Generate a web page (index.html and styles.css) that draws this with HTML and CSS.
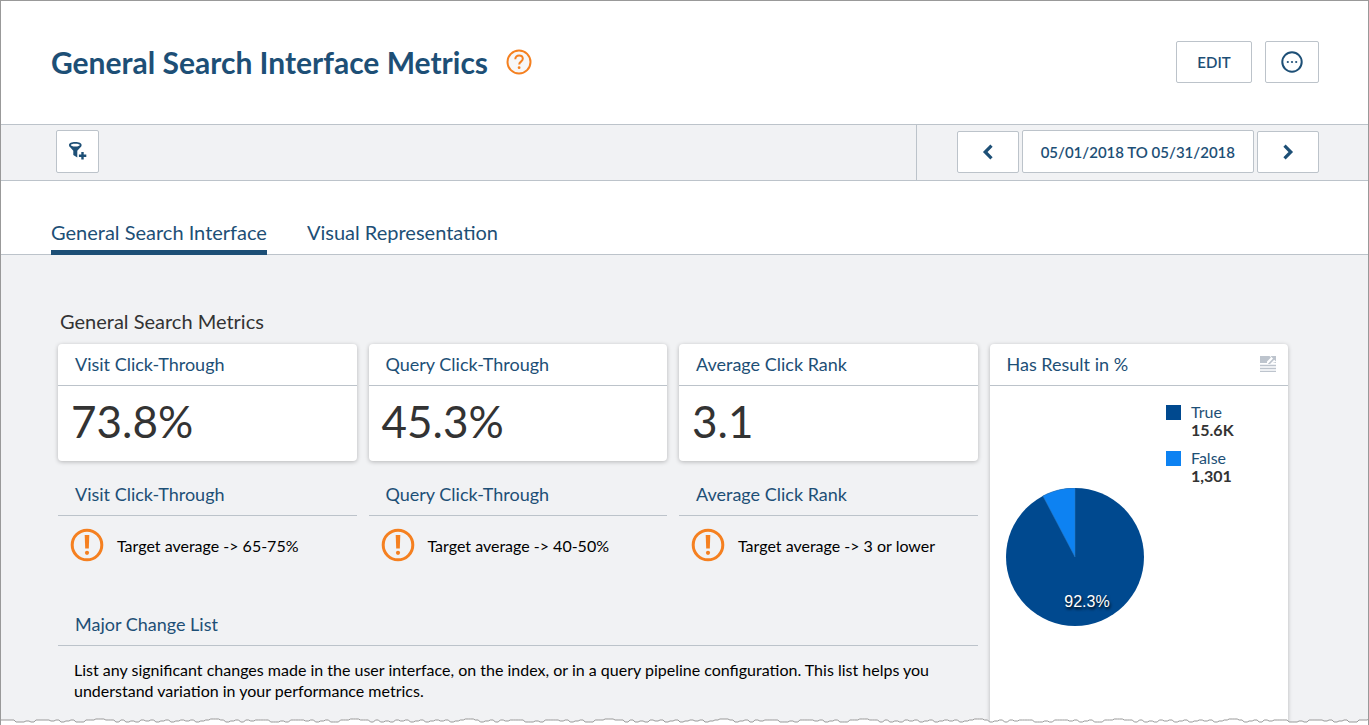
FILE: index.html
```
<!DOCTYPE html>
<html lang="en">
<head>
<meta charset="utf-8">
<title>General Search Interface Metrics</title>
<link rel="stylesheet" href="styles.css">
</head>
<body>
<div class="page">
  <header class="header">
    <h1 class="title">General Search Interface Metrics</h1>
    <a class="help" href="#" aria-label="Help">
      <svg width="26" height="26" viewBox="0 0 26 26" fill="none"><circle cx="13" cy="13" r="11.5" fill="#f7f7f8" stroke="#f58020" stroke-width="2"/><path d="M9.300 10.200c0-2.400 1.600-3.700 3.800-3.700s3.700 1.300 3.700 3.300c0 2.700-3.600 2.900-3.600 5.600" stroke="#f58020" stroke-width="2"/><circle cx="13.1" cy="18.7" r="1.4" fill="#f58020"/></svg>
    </a>
    <div class="actions">
      <button class="btn btn-edit" type="button">EDIT</button>
      <button class="btn btn-more" type="button" aria-label="More">
        <svg width="22" height="22" viewBox="0 0 22 22"><circle cx="11" cy="11" r="9.7" fill="none" stroke="#1d4f76" stroke-width="2"/><g fill="#1d4f76"><circle cx="6.8" cy="11" r="1.1"/><circle cx="11" cy="11" r="1.1"/><circle cx="15.2" cy="11" r="1.1"/></g></svg>
      </button>
    </div>
  </header>

  <div class="toolbar">
    <button class="btn btn-filter" type="button" aria-label="Add filter">
      <svg width="20" height="20" viewBox="0 0 20 20"><path fill="#1d4f76" fill-rule="evenodd" d="M7.300 1C3.500 1 1 2.200 1 4c0 1 .6 1.900 1.400 2.600L5.300 9.800V14l4 2.600V9.800l3-3.200C13.100 5.900 13.600 5 13.600 4c0-1.800-2.500-3-6.300-3zm0 1.700c2.800 0 4.500.6 4.500 1.400s-1.700 1.500-4.500 1.500-4.500-.7-4.500-1.500 1.700-1.400 4.500-1.400z"/><path d="M14.500 11v7.400M10.900 14.700h7.400" stroke="#1d4f76" stroke-width="2.400"/></svg>
    </button>
    <div class="period">
      <button class="btn btn-arrow" type="button" aria-label="Previous period">
        <svg width="12" height="16" viewBox="0 0 12 16" fill="none"><path d="M9.500 1.700L3.200 8l6.300 6.300" stroke="#1d4f76" stroke-width="3.200"/></svg>
      </button>
      <button class="btn btn-dates" type="button">05/01/2018 TO 05/31/2018</button>
      <button class="btn btn-arrow" type="button" aria-label="Next period">
        <svg width="12" height="16" viewBox="0 0 12 16" fill="none"><path d="M2.500 1.700L8.800 8l-6.300 6.300" stroke="#1d4f76" stroke-width="3.200"/></svg>
      </button>
    </div>
  </div>

  <nav class="tabs">
    <a class="tab tab-active" href="#">General Search Interface</a>
    <a class="tab" href="#">Visual Representation</a>
  </nav>

  <main class="dashboard">
    <h2 class="section-title">General Search Metrics</h2>
    <div class="grid">
      <section class="panel card">
        <h3 class="panel-title">Visit Click-Through</h3>
        <p class="value">73.8%</p>
      </section>
      <section class="panel card">
        <h3 class="panel-title">Query Click-Through</h3>
        <p class="value">45.3%</p>
      </section>
      <section class="panel card">
        <h3 class="panel-title">Average Click Rank</h3>
        <p class="value">3.1</p>
      </section>

      <section class="panel card pie-card">
        <h3 class="panel-title">Has Result in %
          <button class="expand" type="button" aria-label="Explore">
            <svg width="16" height="16" viewBox="0 0 16 16"><path fill="#bdc4cd" d="M0 0h9.500L11 1.500 7 5.500V7H0zM10.500 0H16v5.500l-1.800-1.700L10 8H7.800L13 2.500zM12.500 7L16 6v1z"/><path d="M0 9.500h16M0 12.500h16M0 15.300h16" stroke="#bdc4cd" stroke-width="1.300"/></svg>
          </button>
        </h3>
        <ul class="legend">
          <li class="legend-item"><span class="swatch swatch-true"></span><span class="legend-text">True<b>15.6K</b></span></li>
          <li class="legend-item"><span class="swatch swatch-false"></span><span class="legend-text">False<b>1,301</b></span></li>
        </ul>
        <svg class="pie" width="138" height="138" viewBox="0 0 138 138" role="img" aria-label="True 92.3%">
          <circle cx="69" cy="69" r="69" fill="#00498f"/>
          <path d="M69 69V0A69 69 0 0 0 36.900 7.900Z" fill="#0d82f2" stroke="#2f78be" stroke-width=".5"/>
          <text class="pie-label" x="81" y="119" text-anchor="middle">92.3%</text>
        </svg>
      </section>

      <section class="panel">
        <h3 class="panel-title">Visit Click-Through</h3>
        <p class="note"><svg class="alert" width="34" height="34" viewBox="0 0 34 34"><circle cx="17" cy="17" r="14.800" fill="none" stroke="#f58020" stroke-width="3"/><path fill="#f58020" d="M14.700 7h4.600l-.5 13.500h-3.600z"/><circle cx="17" cy="24.800" r="2.100" fill="#f58020"/></svg><span class="note-text">Target average -&gt; 65-75%</span></p>
      </section>
      <section class="panel">
        <h3 class="panel-title">Query Click-Through</h3>
        <p class="note"><svg class="alert" width="34" height="34" viewBox="0 0 34 34"><circle cx="17" cy="17" r="14.800" fill="none" stroke="#f58020" stroke-width="3"/><path fill="#f58020" d="M14.700 7h4.600l-.5 13.500h-3.600z"/><circle cx="17" cy="24.800" r="2.100" fill="#f58020"/></svg><span class="note-text">Target average -&gt; 40-50%</span></p>
      </section>
      <section class="panel">
        <h3 class="panel-title">Average Click Rank</h3>
        <p class="note"><svg class="alert" width="34" height="34" viewBox="0 0 34 34"><circle cx="17" cy="17" r="14.800" fill="none" stroke="#f58020" stroke-width="3"/><path fill="#f58020" d="M14.700 7h4.600l-.5 13.500h-3.600z"/><circle cx="17" cy="24.800" r="2.100" fill="#f58020"/></svg><span class="note-text">Target average -&gt; 3 or lower</span></p>
      </section>

      <section class="panel changes">
        <h3 class="panel-title">Major Change List</h3>
        <p class="changes-text">List any significant changes made in the user interface, on the index, or in a query pipeline configuration. This list helps you understand variation in your performance metrics.</p>
      </section>
    </div>
  </main>
  <svg class="torn" viewBox="0 0 1369 8" preserveAspectRatio="none" aria-hidden="true"><path id="torn-line"/></svg>
</div>
<script src="torn.js"></script>
</body>
</html>
```
FILE: styles.css
```
* { box-sizing: border-box; }
body { margin: 0; background: #fff; color: #333; font-family: Lato, "Liberation Sans", sans-serif; }
h1, h2, h3, p, ul { margin: 0; padding: 0; font-weight: 400; }
a { color: inherit; text-decoration: none; }
svg { display: block; flex: none; }

.page { position: relative; display: flex; flex-direction: column; min-height: 100vh; border: 1px solid #999; border-bottom: 0; overflow: hidden; }

.header { display: flex; align-items: center; gap: 18px; height: 124px; padding: 0 49px 2px 50px; border-bottom: 1px solid #bcc3ca; }
.title { color: #1d4f76; font-size: 30px; font-weight: 700; line-height: 40px; }
.actions { display: flex; gap: 13px; margin-left: auto; }

.btn { display: flex; align-items: center; justify-content: center; height: 42px; padding: 0; border: 1px solid #bcc3ca; border-radius: 2px; background: #fff; color: #1d4f76; font: 600 15px/20px Lato, sans-serif; cursor: pointer; }
.btn-edit { width: 76px; }
.btn-more { width: 54px; }
.btn-filter { width: 43px; height: 43px; margin-left: 55px; padding-bottom: 2px; }
.btn-arrow { width: 62px; }
.btn-dates { height: 43px; padding: 0 18px; }

.toolbar { display: flex; align-items: center; height: 56px; padding-bottom: 2px; border-bottom: 1px solid #bcc3ca; background: #f1f2f4; }
.period { display: flex; align-items: center; align-self: stretch; gap: 3px; margin: 0 0 -2px auto; padding: 0 49px 2px 40px; border-left: 1px solid #bcc3ca; }

.tabs { display: flex; align-items: flex-end; gap: 40px; height: 74px; padding-left: 50px; border-bottom: 1px solid #bcc3ca; }
.tab { margin-bottom: -1px; padding-bottom: 6px; border-bottom: 5px solid transparent; color: #1d4f76; font-size: 20px; line-height: 24px; }
.tab-active { border-bottom-color: #1d4f76; }

.dashboard { display: flex; flex: 1; flex-direction: column; padding: 54px 80px 0 57px; background: #f1f2f4; }
.section-title { margin-bottom: 10px; padding-left: 2px; font-size: 20px; line-height: 25px; }
.grid { display: grid; flex: 1; grid-template-columns: repeat(4, 1fr); grid-template-rows: auto auto 1fr; gap: 13px 12px; }
.panel { min-height: 117px; border-radius: 4px; }
.card { background: #fff; box-shadow: 0 1px 4px rgba(0, 0, 0, .25); }
.panel-title { display: flex; align-items: center; height: 42px; padding: 0 12px 2px 17px; border-bottom: 1px solid #bcc3ca; color: #1d4f76; font-size: 18px; line-height: 24px; }
.value { padding: 7px 13px; font-size: 44px; line-height: 56px; }
.note { display: flex; align-items: center; gap: 13px; padding: 12px; color: #000; font-size: 16px; line-height: 20px; }
.note-text { padding-top: 2px; }
.changes { grid-column: span 3; }
.changes-text { padding: 13px 16px; color: #000; font-size: 16px; line-height: 21px; }

.pie-card { grid-row: 1 / span 3; grid-column: 4; }
.expand { margin-left: auto; padding: 0; border: 0; background: none; cursor: pointer; }
.legend { display: grid; gap: 10px; width: 112px; margin: 0 10px 0 auto; padding-top: 17px; list-style: none; }
.legend-item { display: flex; gap: 10px; }
.swatch { width: 15px; height: 15px; margin-top: 2px; }
.swatch-true { background: #00498f; }
.swatch-false { background: #0d82f2; }
.legend-text { color: #1d4f76; font-size: 16px; line-height: 18px; }
.legend-text b { display: block; color: #333; font-weight: 700; }
.pie { margin: 3px 0 0 16px; }
.pie-label { fill: #fff; font: 16px "Liberation Sans", sans-serif; text-shadow: 1px 2px 3px #000; }

.torn { position: absolute; right: 0; bottom: 0; left: 0; width: 100%; height: 8px; }
.torn path { fill: #fff; stroke: #999; stroke-width: 1; shape-rendering: crispEdges; }
```
FILE: torn.js
```
// Ragged lower edge: vertical offsets repeated along the width of the page.
const steps = [0, 0, 0, 2, 2, 1, 2, 0, 0, 0, 1, 0, 2, 1, 0, 2, 2, 0, 0, -1, -1, 0, 0, 2, 0, 2, 1, 2, 0, 1, 0, 2, 1, 0, 2, 1, 0, 1, 0, 2, 1, 0, -1, -1, 0, 2, 1, 0, 2, 0, 1];
let d = "M-2 12V3";
for (let x = 0, i = 0; x <= 1372; x += 5, i += 1) {
  d += `L${x} ${steps[i % steps.length] + 3}h3`;
}
document.getElementById("torn-line").setAttribute("d", `${d}V12Z`);
```
